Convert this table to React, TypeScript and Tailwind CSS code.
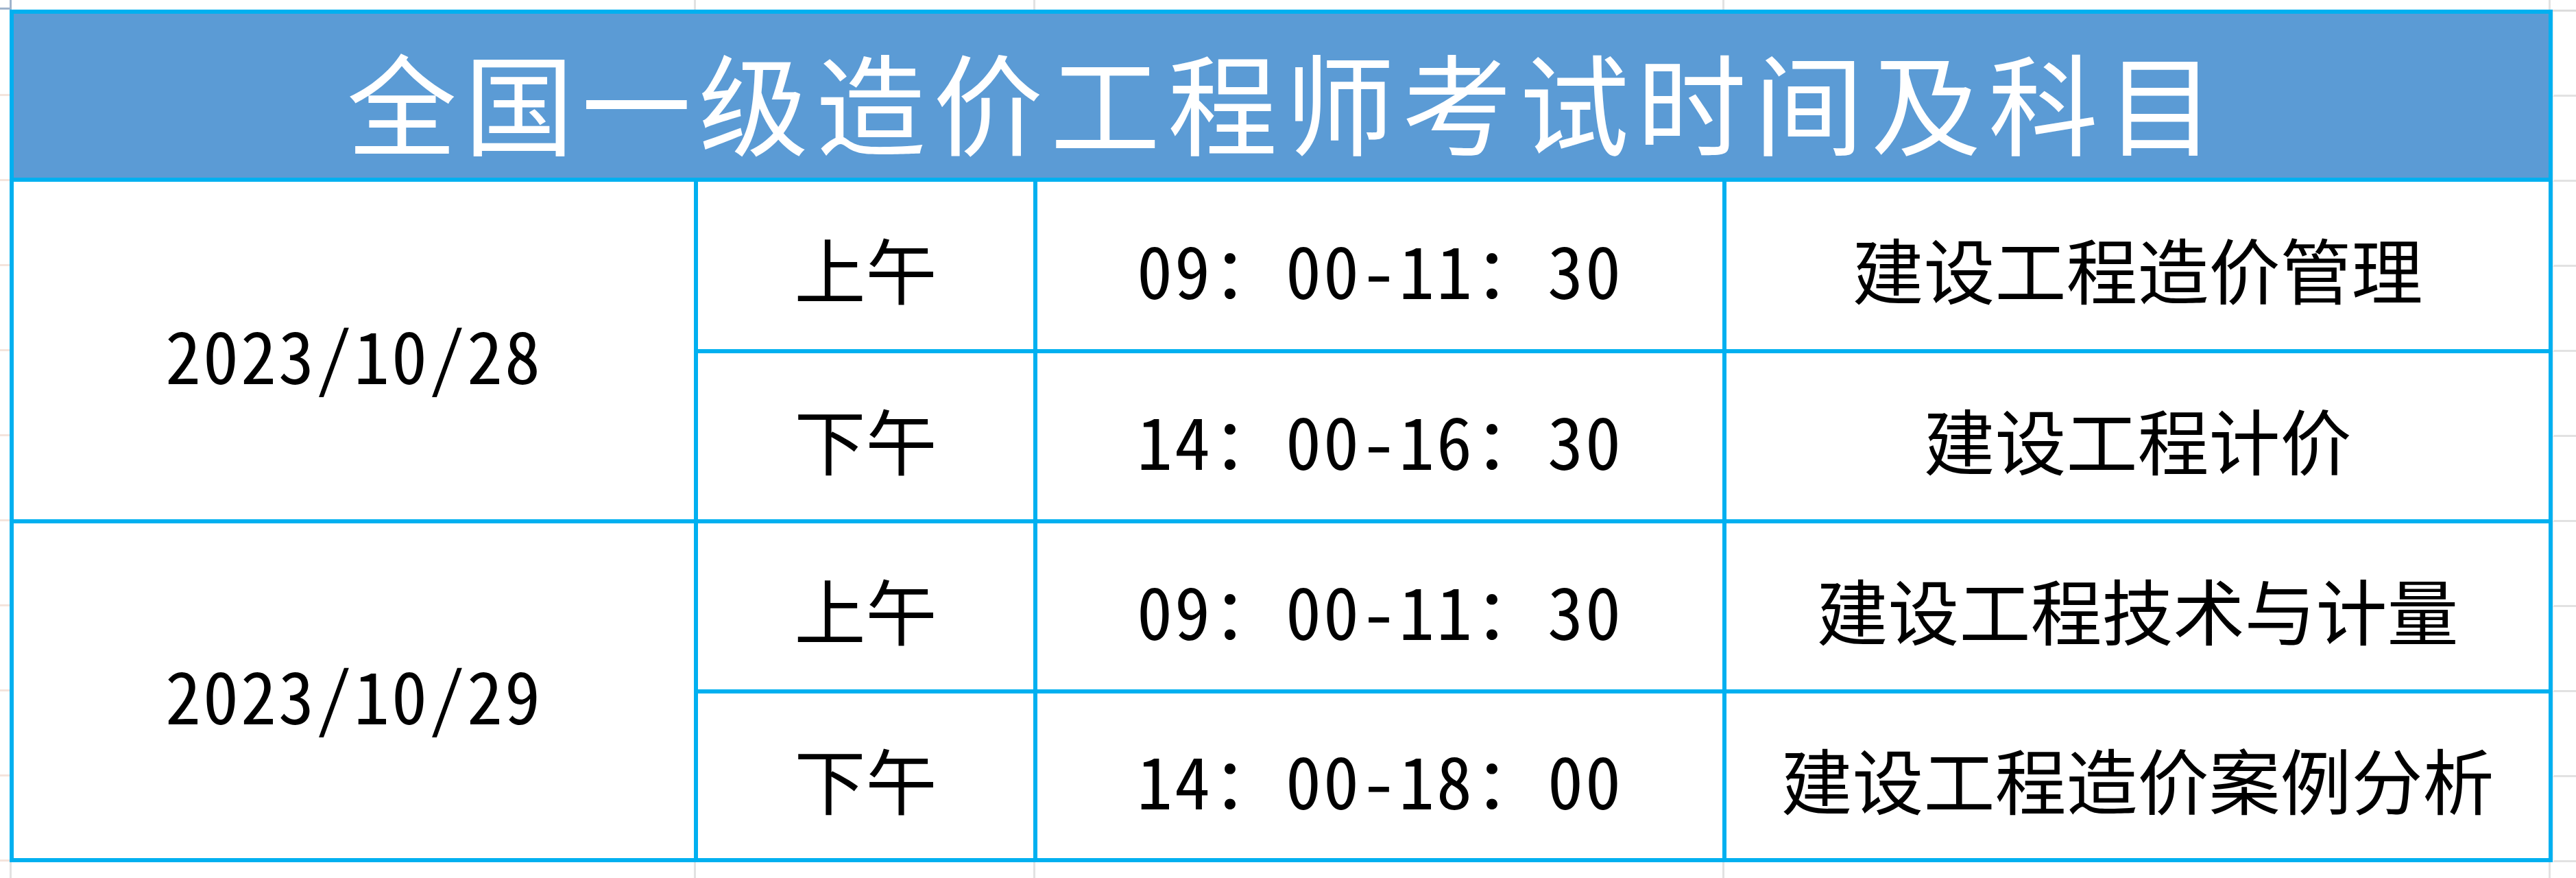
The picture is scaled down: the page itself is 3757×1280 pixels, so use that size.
import React from "react";

const GRID = "border-[#e2e2e2]";

function BodyCell({ children, num = false, span = false }: { children: React.ReactNode; num?: boolean; span?: boolean }) {
  return (
    <div
      className={
        "bg-white flex items-center justify-center pt-[8px] text-[104px] leading-none text-black whitespace-nowrap " +
        (span ? "row-span-2 " : "") +
        (num ? "[font-feature-settings:'hwid'] tracking-[3px]" : "")
      }
    >
      {children}
    </div>
  );
}

export default function App() {
  const rows = [
    { date: "2023/10/28", items: [["上午", "09：00-11：30", "建设工程造价管理"], ["下午", "14：00-16：30", "建设工程计价"]] },
    { date: "2023/10/29", items: [["上午", "09：00-11：30", "建设工程技术与计量"], ["下午", "14：00-18：00", "建设工程造价案例分析"]] },
  ];
  return (
    <div className="w-[3757px] h-[1280px] bg-white flex flex-col overflow-hidden font-['Noto_Sans_CJK_SC','Noto_Sans_CJK_JP',sans-serif]">
      {/* top strip with sheet gridlines */}
      <div className="h-[14px] flex shrink-0">
        <div className="w-[17px] border-r-[3px] border-b-[3px] border-[#9fb3cc]" />
        <div className={`w-[998px] border-r-[3px] ${GRID}`} />
        <div className={`w-[495px] border-r-[3px] ${GRID}`} />
        <div className={`w-[1005px] border-r-[3px] ${GRID}`} />
        <div className={`w-[1205px] border-r-[3px] ${GRID}`} />
      </div>
      <div className="flex shrink-0">
        <div className="w-[14px] flex flex-col">
          <div className="h-[2px]" />
          {Array.from({ length: 10 }).map((_, i) => (
            <div key={i} className="h-[124px] border-b-[3px] border-[#f4e4dc]" />
          ))}
        </div>
        <div className="grid bg-[#00B0F0] p-[6px] gap-[6px] grid-cols-[992px_489px_999px_1199px] grid-rows-[239px_244px_242px_242px_240px] w-[3709px] h-[1243px]">
          <div className="col-span-4 bg-[#5B9BD5] flex items-center justify-center pt-[10px]">
            <span className="text-[160px] leading-none tracking-[11px] mr-[-11px] text-white font-normal whitespace-nowrap">
              全国一级造价工程师考试时间及科目
            </span>
          </div>
          {rows.map((r) => (
            <React.Fragment key={r.date}>
              <BodyCell num span>{r.date}</BodyCell>
              {r.items.map(([p, t, s]) => (
                <React.Fragment key={p + t}>
                  <BodyCell>{p}</BodyCell>
                  <BodyCell num>{t}</BodyCell>
                  <BodyCell>{s}</BodyCell>
                </React.Fragment>
              ))}
            </React.Fragment>
          ))}
        </div>
        <div className="flex-1 flex flex-col">
          <div className="h-[3px] bg-[#dcdcdc]" />
          {Array.from({ length: 10 }).map((_, i) => (
            <div key={i} className={`h-[124px] border-b-[3px] ${GRID} border-l-[2px] border-l-[#f6f6f6]`} />
          ))}
        </div>
      </div>
      {/* bottom strip */}
      <div className="flex-1 flex">
        <div className={`w-[17px] border-r-[3px] ${GRID}`} />
        <div className={`w-[998px] border-r-[3px] ${GRID}`} />
        <div className={`w-[495px] border-r-[3px] ${GRID}`} />
        <div className={`w-[1005px] border-r-[3px] ${GRID}`} />
        <div className={`w-[1205px] border-r-[3px] ${GRID}`} />
      </div>
    </div>
  );
}
